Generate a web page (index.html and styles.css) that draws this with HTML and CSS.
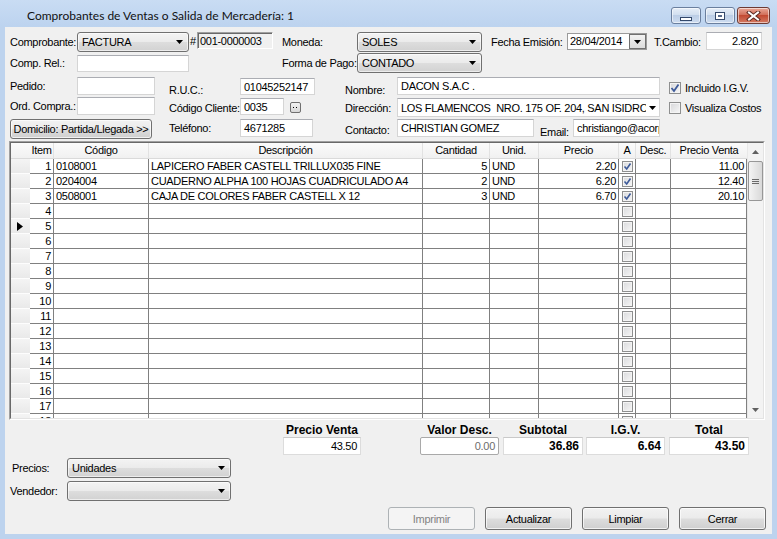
FILE: index.html
```html
<!DOCTYPE html>
<html lang="es">
<head>
<meta charset="utf-8">
<title>Comprobantes de Ventas</title>
<link rel="stylesheet" href="styles.css">
</head>
<body>
<div class="window">
  <div class="titlebar">
    <div class="title">Comprobantes de Ventas o Salida de Mercadería: 1</div>
    <div class="caption">
      <div class="cap-btn cap-min"><span class="g-min"></span></div>
      <div class="cap-btn cap-max"><span class="g-max"></span></div>
      <div class="cap-btn cap-close">
        <svg width="15" height="10" viewBox="0 0 15 10"><path d="M3 1.5 L12 8.5 M12 1.5 L3 8.5" stroke="#5a2a22" stroke-width="4" stroke-linecap="square"/><path d="M3 1.5 L12 8.5 M12 1.5 L3 8.5" stroke="#fff" stroke-width="2" stroke-linecap="square"/></svg>
      </div>
    </div>
  </div>

  <div class="client">
    <div class="row r1">
      <span class="lbl l-a">Comprobante:</span>
      <div class="combo w112"><span class="cval">FACTURA</span><svg class="arr" width="7" height="4"><polygon points="0,0 7,0 3.5,4"/></svg></div>
      <span class="lbl hash">#</span>
      <div class="tb ro w76">001-0000003</div>
      <span class="lbl l-mon">Moneda:</span>
      <div class="combo w125"><span class="cval">SOLES</span><svg class="arr" width="7" height="4"><polygon points="0,0 7,0 3.5,4"/></svg></div>
      <span class="lbl l-fec">Fecha Emisión:</span>
      <div class="date"><span class="cval">28/04/2014</span><span class="date-btn"><svg width="7" height="4"><polygon points="0,0 7,0 3.5,4"/></svg></span></div>
      <span class="lbl l-tc">T.Cambio:</span>
      <div class="tb right w56 tc">2.820</div>
    </div>

    <div class="row r2">
      <span class="lbl l-a">Comp. Rel.:</span>
      <div class="tb w112 mt2 h17"></div>
      <span class="lbl l-fp">Forma de Pago:</span>
      <div class="combo w125"><span class="cval">CONTADO</span><svg class="arr" width="7" height="4"><polygon points="0,0 7,0 3.5,4"/></svg></div>
    </div>

    <div class="form3">
      <span class="lbl c1 fl">Pedido:</span>
      <div class="tb c2 h18"></div>
      <span class="lbl c4 lowb1">R.U.C.:</span>
      <div class="tb c5 h17 mt1 w75">01045252147</div>
      <span class="lbl c7 lowc1">Nombre:</span>
      <div class="tb c8 h18">DACON S.A.C .</div>
      <label class="chk c10 ck1"><span class="cbox on"><svg width="10" height="10" viewBox="0 0 10 10"><path d="M1.5 5 L4 8 L8.5 1.5" fill="none" stroke="#3d5a99" stroke-width="1.8"/></svg></span>Incluido I.G.V.</label>

      <span class="lbl c1 fl">Ord. Compra.:</span>
      <div class="tb c2 h18"></div>
      <div class="c5wrap c4span">
        <span class="lbl lb2">Código Cliente:</span>
        <div class="tb h17 mt1 w44">0035</div>
        <span class="mini-btn"><svg width="5" height="2"><rect x="0" y="0" width="1" height="1"/><rect x="3" y="0" width="1" height="1"/></svg></span>
      </div>
      <span class="lbl c7 lowc2">Dirección:</span>
      <div class="tb c8 ecombo h19 mt1"><span class="cval pre">LOS FLAMENCOS  NRO. 175 OF. 204, SAN ISIDRO</span><svg class="arr" width="7" height="4"><polygon points="0,0 7,0 3.5,4"/></svg></div>
      <label class="chk c10 ck2"><span class="cbox"></span>Visualiza Costos</label>

      <div class="btn dom c1span">Domicilio: Partida/Llegada &gt;&gt;</div>
      <span class="lbl c4 lowb3">Teléfono:</span>
      <div class="tb c5 h18 w73">4671285</div>
      <span class="lbl c7 lowc3">Contacto:</span>
      <div class="c8 contact">
        <div class="tb h18 w137">CHRISTIAN GOMEZ</div>
        <span class="lbl l-email">Email:</span>
        <div class="tb h18 w87">christiango@acorp.com</div>
      </div>
    </div>

    <div class="grid">
      <div class="grid-in">
        <div class="gmain">
          <div class="ghead">
            <div class="rh"></div><div>Item</div><div>Código</div><div>Descripción</div><div>Cantidad</div><div>Unid.</div><div>Precio</div><div>A</div><div>Desc.</div><div>Precio Venta</div>
          </div>
          <div class="grow"><div class="rh"></div><div class="n">1</div><div>0108001</div><div>LAPICERO FABER CASTELL TRILLUX035 FINE</div><div class="n">5</div><div>UND</div><div class="n">2.20</div><div class="ck"><span class="gcb"><svg width="9" height="9" viewBox="0 0 9 9"><path d="M1.5 4.5 L3.7 7 L7.5 1.5" fill="none" stroke="#3d5a99" stroke-width="1.6"/></svg></span></div><div></div><div class="n">11.00</div></div>
          <div class="grow"><div class="rh"></div><div class="n">2</div><div>0204004</div><div>CUADERNO ALPHA 100 HOJAS CUADRICULADO A4</div><div class="n">2</div><div>UND</div><div class="n">6.20</div><div class="ck"><span class="gcb"><svg width="9" height="9" viewBox="0 0 9 9"><path d="M1.5 4.5 L3.7 7 L7.5 1.5" fill="none" stroke="#3d5a99" stroke-width="1.6"/></svg></span></div><div></div><div class="n">12.40</div></div>
          <div class="grow"><div class="rh"></div><div class="n">3</div><div>0508001</div><div>CAJA DE COLORES FABER CASTELL X 12</div><div class="n">3</div><div>UND</div><div class="n">6.70</div><div class="ck"><span class="gcb"><svg width="9" height="9" viewBox="0 0 9 9"><path d="M1.5 4.5 L3.7 7 L7.5 1.5" fill="none" stroke="#3d5a99" stroke-width="1.6"/></svg></span></div><div></div><div class="n">20.10</div></div>
          <div class="grow"><div class="rh"></div><div class="n">4</div><div></div><div></div><div></div><div></div><div></div><div class="ck"><span class="gcb"></span></div><div></div><div></div></div>
          <div class="grow"><div class="rh"><svg class="ind" width="6" height="9"><polygon points="0,0 6,4.5 0,9"/></svg></div><div class="n">5</div><div></div><div></div><div></div><div></div><div></div><div class="ck"><span class="gcb"></span></div><div></div><div></div></div>
          <div class="grow"><div class="rh"></div><div class="n">6</div><div></div><div></div><div></div><div></div><div></div><div class="ck"><span class="gcb"></span></div><div></div><div></div></div>
          <div class="grow"><div class="rh"></div><div class="n">7</div><div></div><div></div><div></div><div></div><div></div><div class="ck"><span class="gcb"></span></div><div></div><div></div></div>
          <div class="grow"><div class="rh"></div><div class="n">8</div><div></div><div></div><div></div><div></div><div></div><div class="ck"><span class="gcb"></span></div><div></div><div></div></div>
          <div class="grow"><div class="rh"></div><div class="n">9</div><div></div><div></div><div></div><div></div><div></div><div class="ck"><span class="gcb"></span></div><div></div><div></div></div>
          <div class="grow"><div class="rh"></div><div class="n">10</div><div></div><div></div><div></div><div></div><div></div><div class="ck"><span class="gcb"></span></div><div></div><div></div></div>
          <div class="grow"><div class="rh"></div><div class="n">11</div><div></div><div></div><div></div><div></div><div></div><div class="ck"><span class="gcb"></span></div><div></div><div></div></div>
          <div class="grow"><div class="rh"></div><div class="n">12</div><div></div><div></div><div></div><div></div><div></div><div class="ck"><span class="gcb"></span></div><div></div><div></div></div>
          <div class="grow"><div class="rh"></div><div class="n">13</div><div></div><div></div><div></div><div></div><div></div><div class="ck"><span class="gcb"></span></div><div></div><div></div></div>
          <div class="grow"><div class="rh"></div><div class="n">14</div><div></div><div></div><div></div><div></div><div></div><div class="ck"><span class="gcb"></span></div><div></div><div></div></div>
          <div class="grow"><div class="rh"></div><div class="n">15</div><div></div><div></div><div></div><div></div><div></div><div class="ck"><span class="gcb"></span></div><div></div><div></div></div>
          <div class="grow"><div class="rh"></div><div class="n">16</div><div></div><div></div><div></div><div></div><div></div><div class="ck"><span class="gcb"></span></div><div></div><div></div></div>
          <div class="grow"><div class="rh"></div><div class="n">17</div><div></div><div></div><div></div><div></div><div></div><div class="ck"><span class="gcb"></span></div><div></div><div></div></div>
          <div class="grow"><div class="rh"></div><div class="n">18</div><div></div><div></div><div></div><div></div><div></div><div class="ck"><span class="gcb"></span></div><div></div><div></div></div>
        </div>
        <div class="vscroll">
          <div class="sb-btn"><svg width="7" height="4"><polygon points="0,4 7,4 3.5,0"/></svg></div>
          <div class="sb-thumb"><span class="grip"></span></div>
          <div class="sb-track"></div>
          <div class="sb-btn"><svg width="7" height="4"><polygon points="0,0 7,0 3.5,4"/></svg></div>
        </div>
      </div>
    </div>

    <div class="totals">
      <div class="tcol w78"><div class="tlbl">Precio Venta</div><div class="tb tval">43.50</div></div>
      <div class="tcol w79 m59"><div class="tlbl">Valor Desc.</div><div class="tb tval dis">0.00</div></div>
      <div class="tcol w80 m4"><div class="tlbl">Subtotal</div><div class="tb tval b">36.86</div></div>
      <div class="tcol w79 m3"><div class="tlbl">I.G.V.</div><div class="tb tval b">6.64</div></div>
      <div class="tcol w80 m4"><div class="tlbl">Total</div><div class="tb tval b">43.50</div></div>
    </div>

    <div class="row r-prec">
      <span class="lbl l-prec">Precios:</span>
      <div class="combo w164"><span class="cval">Unidades</span><svg class="arr" width="7" height="4"><polygon points="0,0 7,0 3.5,4"/></svg></div>
    </div>
    <div class="row r-vend">
      <span class="lbl l-vend">Vendedor:</span>
      <div class="combo w164"><span class="cval"></span><svg class="arr" width="7" height="4"><polygon points="0,0 7,0 3.5,4"/></svg></div>
    </div>

    <div class="actions">
      <div class="btn act disabled">Imprimir</div>
      <div class="btn act">Actualizar</div>
      <div class="btn act">Limpiar</div>
      <div class="btn act">Cerrar</div>
    </div>
  </div>
</div>
</body>
</html>
```

FILE: styles.css
```css
* { box-sizing: border-box; }
html, body { margin: 0; padding: 0; }
body {
  width: 777px; height: 539px; overflow: hidden;
  font-family: "Liberation Sans", Arial, sans-serif;
  font-size: 11px; letter-spacing: -0.3px; color: #000;
  background: #bfd4ee;
}
.window { width: 777px; height: 539px; background: #bdd3ee; display: flex; flex-direction: column; }

.titlebar { height: 27px; display: flex; align-items: flex-start; background: linear-gradient(#c9dcf3, #bcd3ef); flex: none; }
.title { flex: 1; margin: 8px 0 0 27px; font-family: "Lato", "Noto Sans", sans-serif; font-size: 12px; letter-spacing: 0; line-height: 16px; color: #111; }
.caption { display: flex; gap: 3px; margin: 7px 7px 0 0; }
.cap-btn { height: 17px; border: 1px solid #6a7f9e; border-radius: 3px; display: flex; align-items: center; justify-content: center; box-shadow: inset 0 0 0 1px rgba(255,255,255,.55); }
.cap-min, .cap-max { width: 30px; background: linear-gradient(#e6eef8, #d2dfef 45%, #bccee6 50%, #cddcf0); }
.cap-max { margin-left: 1px; }
.cap-close { width: 33px; margin-left: -1px; border-color: #6d3b34; background: linear-gradient(#e9a898, #d2705a 45%, #c24a32 50%, #d47a63); }
.g-min { width: 12px; height: 4px; margin-top: 6px; background: #fff; border: 1px solid #33486a; }
.g-max { width: 10px; height: 8px; border: 1px solid #33486a; background: #56698a; box-shadow: inset 0 0 0 2px #fff; }

.client { margin: 0 5px; height: 507px; background: #f0f0f0; display: flex; flex-direction: column; flex: none; }

.row { display: flex; align-items: flex-start; height: 20px; flex: none; }
.r1 { margin-top: 5px; }
.r2 { margin-top: 1px; }
.lbl { line-height: 20px; white-space: nowrap; flex: none; }
.l-a { width: 67px; margin-left: 5px; }
.hash { width: 8px; line-height: 18px; text-align: center; }
.l-mon { width: 75px; margin-left: 9px; }
.l-fec { width: 76px; margin-left: 9px; }
.l-tc { width: 52px; margin-left: 7px; }
.l-fp { width: 75px; margin-left: 93px; }

.w44 { width: 44px; } .w56 { width: 56px; } .w73 { width: 73px; } .w75 { width: 75px; } .w76 { width: 76px; }
.w78 { width: 78px; } .w79 { width: 79px; } .w80 { width: 80px; } .w87 { width: 87px; }
.w112 { width: 112px; } .w125 { width: 125px; } .w137 { width: 137px; } .w164 { width: 164px; }
.h17 { height: 17px !important; } .h18 { height: 18px; } .h19 { height: 19px !important; }
.mt1 { margin-top: 1px; } .mt2 { margin-top: 2px; }

.combo {
  flex: none; height: 20px; display: flex; align-items: center; padding-left: 4px;
  border: 1px solid #707070; border-radius: 3px;
  background: linear-gradient(#f3f3f3, #ebebeb 48%, #dddddd 52%, #d2d2d2);
  box-shadow: inset 0 0 0 1px rgba(255,255,255,.6);
}
.cval { flex: 1; white-space: nowrap; overflow: hidden; }
.pre { white-space: pre; }
.arr { flex: none; margin: 0 5px 1px 4px; fill: #000; }

.tb {
  flex: none; height: 18px; background: #fff;
  border: 1px solid #d5d5d5; border-top-color: #abadb3;
  line-height: 16px; padding: 0 3px; white-space: nowrap; overflow: hidden;
}
.tb.ro { height: 17px; background: #f0f0f0; border-color: #a0a0a0 #fff #fff #a0a0a0; box-shadow: inset 1px 1px 0 #696969; padding-left: 2px; }
.right { text-align: right; }
.tc { height: 18px; }

.date {
  flex: none; width: 80px; height: 17px; margin-top: 1px; display: flex; align-items: stretch;
  background: #fff; border: 1px solid #9a9a9a; padding-left: 2px; line-height: 15px;
}
.date-btn {
  width: 17px; flex: none; display: flex; align-items: center; justify-content: center;
  border: 1px solid #707070; background: linear-gradient(#f2f2f2, #dcdcdc);
}
.date-btn svg { fill: #000; }

.form3 {
  margin-top: 4px; flex: none;
  display: grid;
  grid-template-columns: 5px 67px 78px 14px 71px 75px 30px 52px 263px 9px 1fr;
  grid-template-rows: 20px 22px 20px;
  align-items: start;
}
.c1 { grid-column: 2; }
.c2 { grid-column: 3; width: 78px; }
.c4 { grid-column: 5; }
.c5 { grid-column: 6; }
.c4span { grid-column: 5 / 8; }
.c7 { grid-column: 8; }
.c8 { grid-column: 9; width: 263px; }
.c10 { grid-column: 11; }
.c1span { grid-column: 2 / 4; }
.fl { line-height: 18px; }
.lowb1 { line-height: 14px; margin-top: 6px; }
.lowc1 { line-height: 14px; margin-top: 6px; }
.lowc2 { line-height: 14px; margin-top: 4px; }
.lowb3 { line-height: 14px; margin-top: 2px; }
.lowc3 { line-height: 14px; margin-top: 4px; }
.c5wrap { display: flex; align-items: flex-start; }
.lb2 { width: 71px; line-height: 14px; margin-top: 4px; }
.mini-btn {
  width: 11px; height: 11px; margin: 5px 0 0 6px; flex: none;
  border: 1px solid #707070; border-radius: 2px; background: linear-gradient(#f2f2f2, #d8d8d8);
  display: flex; align-items: center; justify-content: center;
}
.mini-btn svg { fill: #000; margin-top: 1px; }
.ecombo { display: flex; align-items: center; padding-right: 0; }
.ecombo .arr { margin: 0 3px 0 3px; }
.contact { display: flex; align-items: flex-start; }
.l-email { margin-left: 6px; width: 33px; line-height: 14px; margin-top: 6px; }

.chk { display: flex; align-items: center; gap: 4px; white-space: nowrap; }
.ck1 { margin-top: 5px; }
.ck2 { margin-top: 5px; }
.cbox {
  width: 12px; height: 12px; flex: none; border: 1px solid #8e8f8f;
  background: linear-gradient(135deg, #d6d7d9, #f7f7f7);
  box-shadow: inset 0 0 0 1px #f4f4f4;
  display: flex; align-items: center; justify-content: center;
}

.btn {
  flex: none; display: flex; align-items: center; justify-content: center; white-space: nowrap;
  border: 1px solid #707070; border-radius: 3px;
  background: linear-gradient(#f2f2f2, #ebebeb 48%, #dddddd 52%, #cfcfcf);
  box-shadow: inset 0 0 0 1px rgba(255,255,255,.7);
}
.dom { width: 142px; height: 20px; }
.btn.disabled { border-color: #adb2b5; background: #f4f4f4; color: #838383; box-shadow: none; }

.grid {
  flex: none; margin: 2px 0 0 4px; width: 756px; height: 279px;
  border: 1px solid; border-color: #a0a0a0 #ffffff #ffffff #a0a0a0;
}
.grid-in {
  width: 100%; height: 100%; display: flex;
  border: 1px solid; border-color: #696969 #e3e3e3 #e3e3e3 #696969;
}
.gmain { width: 736px; flex: none; overflow: hidden; background: #fff; }
.ghead, .grow {
  display: grid;
  grid-template-columns: 19px 24px 95px 274px 67px 49px 80px 17px 35px 76px;
}
.ghead { height: 16px; background: linear-gradient(#fbfbfb, #f0f0f0); }
.ghead > div { text-align: center; line-height: 15px; border-right: 1px solid #e2e2e2; border-bottom: 1px solid #dadada; white-space: nowrap; overflow: hidden; }
.ghead > div:last-child { border-right: none; }
.grow { height: 15px; }
.grow > div {
  border-right: 1px solid #808080; border-bottom: 1px solid #808080;
  line-height: 14px; padding: 0 2px; white-space: nowrap; overflow: hidden;
}
.grow > .rh, .ghead > .rh { border-right: none; }
.grow > .rh { background: linear-gradient(#f4f4f4, #e9e9e9); border-bottom: 1px solid #fdfdfd; padding: 0; display: flex; align-items: center; }
.ind { margin-left: 6px; fill: #000; }
.n { text-align: right; }
.ck { display: flex; justify-content: center; align-items: center; padding: 0 !important; }
.gcb {
  width: 11px; height: 11px; border: 1px solid #8e8f8f;
  background: linear-gradient(135deg, #d9dadc, #f6f6f6);
  box-shadow: inset 0 0 0 1px #f4f4f4;
  display: flex; align-items: center; justify-content: center;
}

.vscroll { width: 16px; flex: none; display: flex; flex-direction: column; background: #f3f3f3; border-left: 1px solid #e8e8e8; }
.sb-btn { height: 17px; flex: none; display: flex; align-items: center; justify-content: center; }
.sb-btn svg { fill: #606060; }
.sb-thumb {
  height: 40px; flex: none; margin-top: 1px;
  border: 1px solid #979797; border-radius: 2px;
  background: linear-gradient(90deg, #f4f4f4, #e6e6e6 50%, #d9d9d9);
  display: flex; align-items: center; justify-content: center;
}
.grip { width: 7px; height: 5px; border-top: 1px solid #6a6a6a; border-bottom: 1px solid #6a6a6a; position: relative; }
.grip::after { content: ""; position: absolute; left: 0; right: 0; top: 1px; border-top: 1px solid #6a6a6a; }
.sb-track { flex: 1; }

.totals { display: flex; margin: 4px 0 0 278px; flex: none; }
.tcol { flex: none; display: flex; flex-direction: column; }
.m59 { margin-left: 59px; } .m4 { margin-left: 4px; } .m3 { margin-left: 3px; }
.tlbl { font-weight: bold; font-size: 12px; letter-spacing: 0; text-align: center; line-height: 13px; height: 13px; }
.tval { width: 100%; height: 18px; text-align: right; padding-right: 3px; font-size: 11px; border-color: #dcdcdc; border-top-color: #c9c9c9; }
.tval.b { font-weight: bold; font-size: 12px; letter-spacing: 0; }
.tval.dis { color: #6d6d6d; border: 1px solid #a9a9a9; border-radius: 2px; }

.r-prec { margin-top: 3px; }
.r-vend { margin-top: 3px; }
.l-prec { width: 55px; margin-left: 7px; }
.l-vend { width: 57px; margin-left: 5px; }

.actions { display: flex; justify-content: flex-end; gap: 10px; margin: 6px 6px 0 0; flex: none; }
.act { width: 87px; height: 23px; }
```
